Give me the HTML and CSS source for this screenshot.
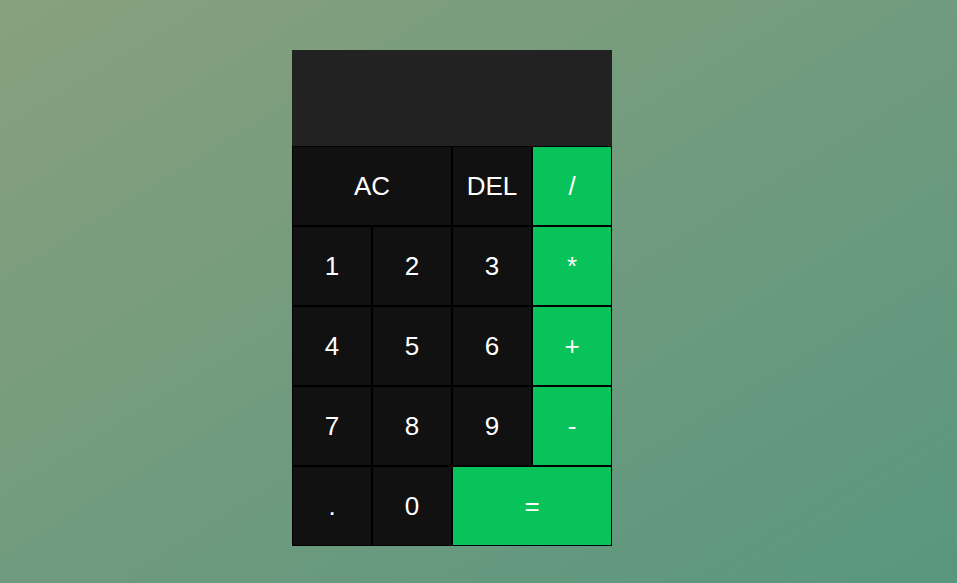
FILE: index.html
```html
<!DOCTYPE html>
<html>
<head>
<meta charset="utf-8">
<link rel="stylesheet" href="styles.css">
</head>
<body>
<div class="calc">
  <div class="display"></div>
  <button class="key span2">AC</button>
  <button class="key">DEL</button>
  <button class="key op">/</button>
  <button class="key">1</button>
  <button class="key">2</button>
  <button class="key">3</button>
  <button class="key op">*</button>
  <button class="key">4</button>
  <button class="key">5</button>
  <button class="key">6</button>
  <button class="key op">+</button>
  <button class="key">7</button>
  <button class="key">8</button>
  <button class="key">9</button>
  <button class="key op">-</button>
  <button class="key">.</button>
  <button class="key">0</button>
  <button class="key op span2">=</button>
</div>
</body>
</html>
```
FILE: styles.css
```css
* { box-sizing: border-box; }
html, body { margin: 0; height: 100%; }
body {
  background: linear-gradient(to bottom right, #88a07d, #59967f);
  font-family: "Liberation Sans", Arial, sans-serif;
  padding: 50px 0 0 292px;
}
.calc {
  display: grid;
  grid-template-columns: repeat(4, 80px);
  grid-template-rows: 96px;
  grid-auto-rows: 80px;
  width: 320px;
}
.display {
  grid-column: 1 / -1;
  height: 96px;
  background: #222222;
}
.key {
  background: #111111;
  color: #ffffff;
  border: 1px solid #000000;
  font-family: "Liberation Sans", Arial, sans-serif;
  font-size: 26px;
  margin: 0;
  padding: 0;
  outline: none;
}
.op { background: #07c35a; }
.span2 { grid-column: span 2; }
```
